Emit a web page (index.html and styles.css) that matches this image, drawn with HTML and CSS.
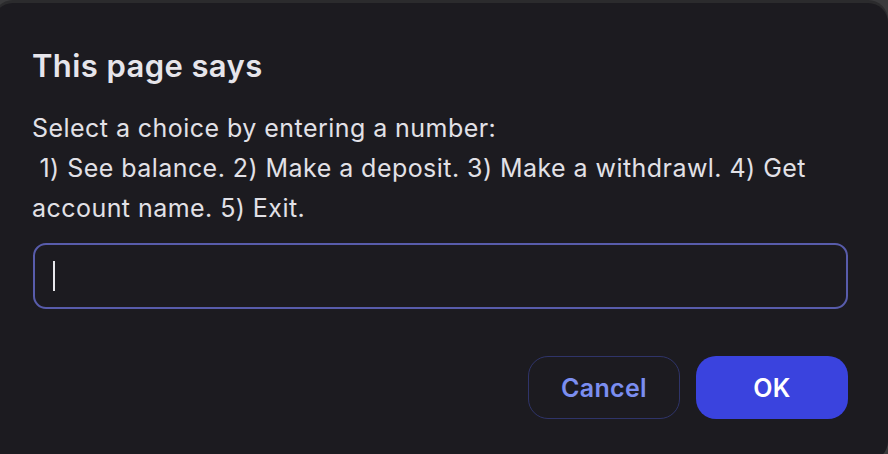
FILE: index.html
```html
<!DOCTYPE html>
<html lang="en">
<head>
<meta charset="utf-8">
<title>This page says</title>
<link rel="stylesheet" href="styles.css">
</head>
<body>
<div class="dialog" role="dialog">
  <h1 class="title">This page says</h1>
  <p class="message">Select a choice by entering a number:
 1) See balance. 2) Make a deposit. 3) Make a withdrawl. 4) Get account name. 5) Exit.</p>
  <div class="field"><span class="caret"></span></div>
  <div class="actions">
    <button class="btn btn-cancel">Cancel</button>
    <button class="btn btn-ok">OK</button>
  </div>
</div>
</body>
</html>
```

FILE: styles.css
```css
html, body {
  margin: 0;
  padding: 0;
  height: 100%;
  overflow: hidden;
}
body {
  background: #3a3a3c;
  padding-top: 3px;
  box-sizing: border-box;
  font-family: Inter, "Noto Sans", sans-serif;
}
.dialog {
  margin-left: -7px;
  width: 895px;
  height: 458px;
  box-sizing: border-box;
  background: #1c1b20;
  border-radius: 20px;
  box-shadow: 0 -3px 0 0 #2b2b2d;
  padding: 44px 40px 0 39px;
  display: flex;
  flex-direction: column;
}
.title {
  margin: 0;
  font-size: 31px;
  font-weight: 600;
  line-height: 37px;
  color: #e6e5eb;
  letter-spacing: 0.4px;
}
.message {
  margin: 24px 0 0 0;
  font-size: 25px;
  line-height: 40px;
  color: #e2e1e7;
  white-space: pre-wrap;
  letter-spacing: 0.45px;
}
.field {
  margin-top: 15px;
  margin-left: 1px;
  height: 66px;
  box-sizing: border-box;
  border: 2px solid #585cab;
  border-radius: 13px;
  display: flex;
  align-items: center;
  padding-left: 18px;
}
.caret {
  width: 2px;
  height: 30px;
  background: #e8e8ec;
}
.actions {
  margin-top: 47px;
  display: flex;
  justify-content: flex-end;
  gap: 16px;
}
.btn {
  width: 152px;
  height: 63px;
  border-radius: 20px;
  font-family: Inter, "Noto Sans", sans-serif;
  font-size: 25px;
  font-weight: 600;
  cursor: pointer;
  letter-spacing: 0.3px;
}
.btn-cancel {
  background: transparent;
  border: 1px solid #2f3469;
  color: #7b8ef0;
}
.btn-ok {
  background: #3a43de;
  border: none;
  color: #ffffff;
}
```
